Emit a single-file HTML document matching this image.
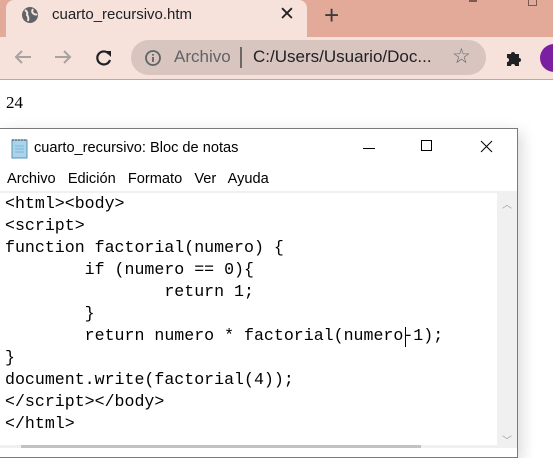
<!DOCTYPE html>
<html><head><style>
*{margin:0;padding:0;box-sizing:border-box}
body{width:553px;height:448px;overflow:hidden;background:#fff;position:relative;font-family:"Liberation Sans",sans-serif}
.abs{position:absolute}
.mono{font-family:"Liberation Mono",monospace;font-size:16.6px;line-height:22px;white-space:pre;color:#000}
</style></head><body>
<div class="abs" style="left:0;top:0;width:553px;height:37px;background:#e3aa99"></div>
<div class="abs" style="left:6px;top:0;width:301px;height:37px;background:#f6e1db;border-radius:8px 8px 0 0"></div>
<div class="abs" style="left:0;top:37px;width:553px;height:43px;background:#f6e1db;border-bottom:1px solid #b9a9a5"></div>
<svg class="abs" style="left:21px;top:6px" width="18" height="18" viewBox="0 0 18 18"><circle cx="9" cy="9" r="8" fill="#5f6368"/><path d="M4 4 Q7 6 6 9 Q8 11 7 15 M12 3 Q10 6 13 8 Q15 9 16 8" stroke="#f6e1db" stroke-width="2" fill="none"/></svg>
<div class="abs" style="left:52px;top:6px;font-size:15px;color:#202124">cuarto_recursivo.htm</div>
<div class="abs" style="left:279px;top:3px;font-size:19px;color:#202124">✕</div>
<div class="abs" style="left:324px;top:0px;font-size:26px;color:#3c3c3c;font-weight:300">+</div>
<div class="abs" style="left:469px;top:0;width:8px;height:2px;background:#7a5a52"></div>
<div class="abs" style="left:528px;top:0;width:9px;height:6px;border:1px solid #7a5a52;border-top:none"></div>
<svg class="abs" style="left:13px;top:49px" width="20" height="16" viewBox="0 0 20 16"><path d="M18 8H3M9 2L3 8l6 6" stroke="#a9a2a0" stroke-width="2" fill="none"/></svg>
<svg class="abs" style="left:53px;top:49px" width="20" height="16" viewBox="0 0 20 16"><path d="M2 8h15M11 2l6 6-6 6" stroke="#a9a2a0" stroke-width="2" fill="none"/></svg>
<svg class="abs" style="left:95px;top:49px" width="18" height="18" viewBox="0 0 18 18"><path d="M14 5A6.5 6.5 0 1 0 15 11" stroke="#202124" stroke-width="2.2" fill="none"/><path d="M10 2h6v6z" fill="#202124"/></svg>
<div class="abs" style="left:131px;top:40px;width:355px;height:35px;background:#d9c5bf;border-radius:18px"></div>
<svg class="abs" style="left:144px;top:49px" width="18" height="18" viewBox="0 0 18 18"><circle cx="9" cy="9" r="7" stroke="#5f6368" stroke-width="1.8" fill="none"/><path d="M9 8v5M9 5v1.6" stroke="#5f6368" stroke-width="1.8"/></svg>
<div class="abs" style="left:174px;top:47px;font-size:17px;color:#5f6368">Archivo</div>
<div class="abs" style="left:240px;top:47px;width:1.5px;height:21px;background:#6d6866"></div>
<div class="abs" style="left:253px;top:47px;font-size:17px;color:#202124">C:/Users/Usuario/Doc...</div>
<div class="abs" style="left:452px;top:44px;font-size:21px;color:#5f6368">☆</div>
<svg class="abs" style="left:504px;top:48px" width="20" height="20" viewBox="0 0 20 20"><path d="M3 6h4a2 2 0 1 1 4 0h4v4a2 2 0 1 1 0 4v4H11a2 2 0 1 0-4 0H3v-4a2 2 0 1 0 0-4z" fill="#202124"/></svg>
<div class="abs" style="left:540px;top:44px;width:28px;height:28px;border-radius:50%;background:#7b1fa2"></div>
<div class="abs" style="left:6px;top:93px;font-family:'Liberation Serif',serif;font-size:17px">24</div>
<div class="abs" style="left:0;top:128px;width:518px;height:330px;border:1px solid #7a7a7a;border-left:none;background:#fff;box-shadow:4px 4px 14px rgba(0,0,0,.15)"></div>
<svg class="abs" style="left:10px;top:137px" width="20" height="22" viewBox="0 0 20 22"><rect x="2" y="3" width="15" height="18" fill="#a8d4ec" stroke="#5a8fb0"/><path d="M3 2v2M6 2v2M9 2v2M12 2v2M15 2v2" stroke="#666"/><path d="M5 9h9M5 12h9M5 15h9" stroke="#7fb5d6"/></svg>
<div class="abs" style="left:34px;top:140px;font-size:14.6px;color:#000">cuarto_recursivo: Bloc de notas</div>
<div class="abs" style="left:363px;top:148px;width:12px;height:1px;background:#000"></div>
<div class="abs" style="left:421px;top:140px;width:11px;height:11px;border:1px solid #000"></div>
<svg class="abs" style="left:480px;top:140px" width="13" height="13" viewBox="0 0 13 13"><path d="M1 1l11 11M12 1L1 12" stroke="#000" stroke-width="1"/></svg>
<div class="abs" style="left:7px;top:171px;font-size:14.6px;color:#000;white-space:pre">Archivo   Edición   Formato   Ver   Ayuda</div>
<div class="abs" style="left:0;top:191px;width:517px;height:2px;background:#f0f0f0"></div>
<div class="abs" style="left:497px;top:193px;width:20px;height:255px;background:#f0f0f0"></div>
<div class="abs" style="left:502px;top:196px;font-size:10px;color:#a0a0a0">︿</div>
<div class="abs" style="left:502px;top:432px;font-size:10px;color:#a0a0a0">﹀</div>
<div class="abs" style="left:0;top:445px;width:497px;height:3px;background:#f0f0f0"></div>
<div class="abs" style="left:21px;top:445px;width:400px;height:3px;background:#c2c2c2"></div>
<div class="abs mono" style="left:5px;top:193px">&lt;html&gt;&lt;body&gt;
&lt;script&gt;
function factorial(numero) {
        if (numero == 0){
                return 1;
        }
        return numero * factorial(numero-1);
}
document.write(factorial(4));
&lt;/script&gt;&lt;/body&gt;
&lt;/html&gt;</div>
<div class="abs" style="left:405px;top:327px;width:1px;height:20px;background:#000"></div>
</body></html>
